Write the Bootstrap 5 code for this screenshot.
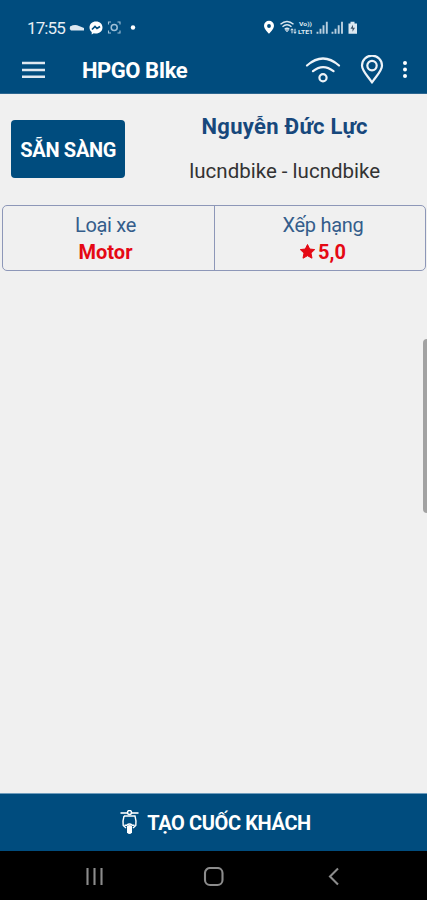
<!DOCTYPE html>
<html lang="vi">
<head>
<meta charset="utf-8">
<meta name="viewport" content="width=device-width, initial-scale=1">
<title>HPGO BIke</title>
<link href="https://cdn.jsdelivr.net/npm/bootstrap@5.3.0/dist/css/bootstrap.min.css" rel="stylesheet">
<style>
:root{--brand:#004c7e}
body{font-family:Roboto,"Noto Sans",sans-serif;background:#f0f0f0;color:#333}
svg{display:block;flex:none;fill:none}
.screen{height:900px;background:#f0f0f0}
.top-area{background:var(--brand);height:94px;border-bottom:1px solid #2c6690}
.status{height:46px;padding:9px 69px 0 27px;color:#e6eef5;font-size:17px}
.clock{width:38px;white-space:nowrap;letter-spacing:-.9px;line-height:20px}
.app-bar{height:48px;padding:0 17px 0 22px}
.title{font-size:22px;font-weight:700;line-height:26px;letter-spacing:-.45px;margin:2px 0 0 37px;white-space:nowrap}
.signal{margin-right:19px}
.profile{height:111px;padding:26px 0 0 11px}
.ready{width:115px;height:58px;border-radius:4px;background:var(--brand);color:#fff;font-weight:700;font-size:20px;letter-spacing:-.3px;white-space:nowrap;padding:2px 0 0;border:0}
.ready:hover{background:var(--brand);color:#fff}
.person{margin-left:17px;width:286px;margin-top:-7px}
.driver{font-size:22px;line-height:28px;font-weight:700;letter-spacing:.28px;color:#17487c}
.login{font-size:20.5px;line-height:26px;margin-top:17px}
.info{height:66px;margin:0 1px 0 2px;border:1px solid #8d97b8;border-radius:5px}
.info>div{padding-right:6px}
.info>div+div{border-left:1px solid #8d97b8;padding:0 0 0 6px}
.lbl{font-size:20px;line-height:27px;letter-spacing:-.3px;color:#345d8b;margin-top:6px}
.val{font-size:20px;line-height:27px;font-weight:700;color:#e50914}
.star{margin:0 3px 3px 0}
.thumb{width:4px;height:174px;margin-top:68px;background:#a2a2a2;border-radius:4px 0 0 4px}
.action{height:58px;background:var(--brand);border-top:1px solid #6e9cbc;font-weight:700;font-size:20px;padding:0 0 0 4px}
.cta{letter-spacing:-.38px}
.sysnav{height:49px;background:#000;padding:2px 2px 0 0}
</style>
</head>
<body>
<div class="screen d-flex flex-column overflow-hidden">
  <header class="top-area text-white">
    <div class="status d-flex align-items-center">
      <span class="clock">17:55</span>
      <svg class="ms-1" width="70" height="18" viewBox="0 0 70 18">
        <path d="M1 7.500q5-2.500 9-.5l5 2v2.500H2q-2-1.500-1-4z" fill="#dce8f1"/>
        <path d="M27 2.500c-4 0-6.500 2.600-6.500 6 0 2 1 3.500 2.200 4.500v2.500l2.100-1.200c5 1 8.700-1.800 8.700-5.800 0-3.400-2.500-6-6.500-6z" fill="#fff"/>
        <path d="M23 10.500l3-3 2 2 3-2" stroke="#004c7e" stroke-width="1.700"/>
        <path d="M39.500 5.500V3H42M48.500 3H51V5.500M39.500 11.500v2.500H42M48.500 14H51V11.500" stroke="#9fc0d8" stroke-width="1.100"/>
        <circle cx="45.200" cy="8.500" r="3" stroke="#9fc0d8" stroke-width="1.500"/>
        <circle cx="64" cy="8.500" r="2.200" fill="#fff"/>
      </svg>
      <svg class="ms-auto" width="96" height="18" viewBox="262 .7 96 18">
        <path d="M269 2.500a5 5 0 0 0-5 5c0 3.300 5 8 5 8s5-4.700 5-8a5 5 0 0 0-5-5zm0 3.300a1.900 1.900 0 1 1 0 3.800 1.900 1.900 0 0 1 0-3.800z" fill="#fff"/>
        <path d="M280.500 6q6.500-5.500 13 0M282.500 8.500q4.500-4 9 0M284.700 11q2.300-2 4.600 0" stroke="#dce8f1" stroke-width="1.400"/>
        <path d="M287 13.500l-1.500-2h3zM292 15v-4.500m-1.500 1.500 1.500-1.500 1.500 1.500M295 10.500V15m-1.300-1.500 1.300 1.500 1.300-1.500" stroke="#dce8f1"/>
        <text x="299" y="7.800" font-size="6" font-weight="700" textLength="13" lengthAdjust="spacingAndGlyphs" fill="#dce8f1">Vo))</text>
        <text x="298" y="15.500" font-size="6" font-weight="700" textLength="15" lengthAdjust="spacingAndGlyphs" fill="#dce8f1">LTE1</text>
        <path d="M317.500 15.500v-2M320.500 15.500v-5M323.500 15.500V7M326.800 15.500V3.500M332.500 15.500v-2M335.500 15.500v-5M338.700 15.500V7M342 15.500V3.500" stroke="#b9cfdf" stroke-width="1.900"/>
        <path d="M348.500 5.200h2V3.500h4v1.700h2.500v10.300h-8.500z" fill="#dce8f1"/><path d="M353 6.500l-2.500 4h2v3l2.500-4h-2z" fill="#40556a"/>
      </svg>
    </div>
    <nav class="app-bar d-flex align-items-center" aria-label="Menu">
      <svg width="23" height="18" viewBox="0 0 23 18"><path d="M0 2h23M0 9h23M0 15.800h23" stroke="#dfe8f1" stroke-width="2.400"/></svg>
      <span class="title">HPGO BIke</span>
      <svg class="signal ms-auto" width="36" height="28" viewBox="0 0 36 28" stroke="#edf3f8" stroke-width="2.200" stroke-linecap="round"><path d="M2 9.500Q18-4.500 34 9.500M8 15.200q10-8.200 20.500 0"/><circle cx="18" cy="21.800" r="3.600"/></svg>
      <svg class="me-3" width="24" height="30" viewBox="0 .7 24 30" stroke="#edf3f8" stroke-width="2.200"><path d="M12 28.200C8.500 22.500 2 17 2 11.300a10 10 0 0 1 20 0C22 17 15.500 22.500 12 28.200z" stroke-linejoin="round"/><circle cx="12" cy="11.300" r="4.700"/></svg>
      <svg width="10" height="20" viewBox="0 0 10 20"><g fill="#fff"><circle cx="5" cy="3" r="2"/><circle cx="5" cy="9.500" r="2"/><circle cx="5" cy="16" r="2"/></g></svg>
    </nav>
  </header>
  <main class="flex-grow-1">
    <section class="profile d-flex">
      <button type="button" class="ready btn">SẴN SÀNG</button>
      <div class="person text-center text-nowrap"><div class="driver">Nguyễn Đức Lực</div><div class="login">lucndbike - lucndbike</div></div>
    </section>
    <section class="info d-flex text-center">
      <div class="w-50"><div class="lbl">Loại xe</div><div class="val">Motor</div></div>
      <div class="w-50"><div class="lbl">Xếp hạng</div><div class="val d-flex justify-content-center align-items-center"><svg class="star" width="15" height="15" viewBox="0 0 15 15"><path d="M7.500 .5l2.200 4.500 5 .6-3.700 3.500 1 5.100-4.500-2.500L3 14.200l1-5.100L.300 5.600l5-.6z" fill="#e50914" stroke="#e50914" stroke-linejoin="round"/></svg>5,0</div></div>
    </section>
    <div class="thumb ms-auto"></div>
  </main>
  <footer>
    <div class="action d-flex justify-content-center align-items-center text-white text-nowrap">
      <svg class="me-2" width="19" height="26" viewBox="0 1 19 26" stroke="#fff"><path d="M.5 4h18" stroke-width="1.600"/><circle cx="9.500" cy="3.500" r="2" fill="#004c7e" stroke-width="1.500"/><path d="M4 7h11q1.500 5 .8 9.500L13 19M4 7q-1.500 5-.8 9.500L6 19M4.500 16.200h2.200q2.800-2.500 5.600 0h2.200" stroke-width="1.400"/><path d="M7 17q2.500-2 5 0v6.500q-2.500 3-5 0z" fill="#fff" stroke="none"/></svg>
      <span class="cta">TẠO CUỐC KHÁCH</span>
    </div>
    <div class="sysnav d-flex justify-content-center align-items-center">
      <svg width="254" height="20" viewBox="86 0 254 20" stroke="#8c8c8c" stroke-width="2.100"><path d="M87.500 1v17M94.500 1v17M101.500 1v17"/><rect x="205" y="1" width="17.500" height="17" rx="5"/><path d="M338 1.500l-8 8 8 8"/></svg>
    </div>
  </footer>
</div>
<script src="https://cdn.jsdelivr.net/npm/bootstrap@5.3.0/dist/js/bootstrap.bundle.min.js"></script>
</body>
</html>
